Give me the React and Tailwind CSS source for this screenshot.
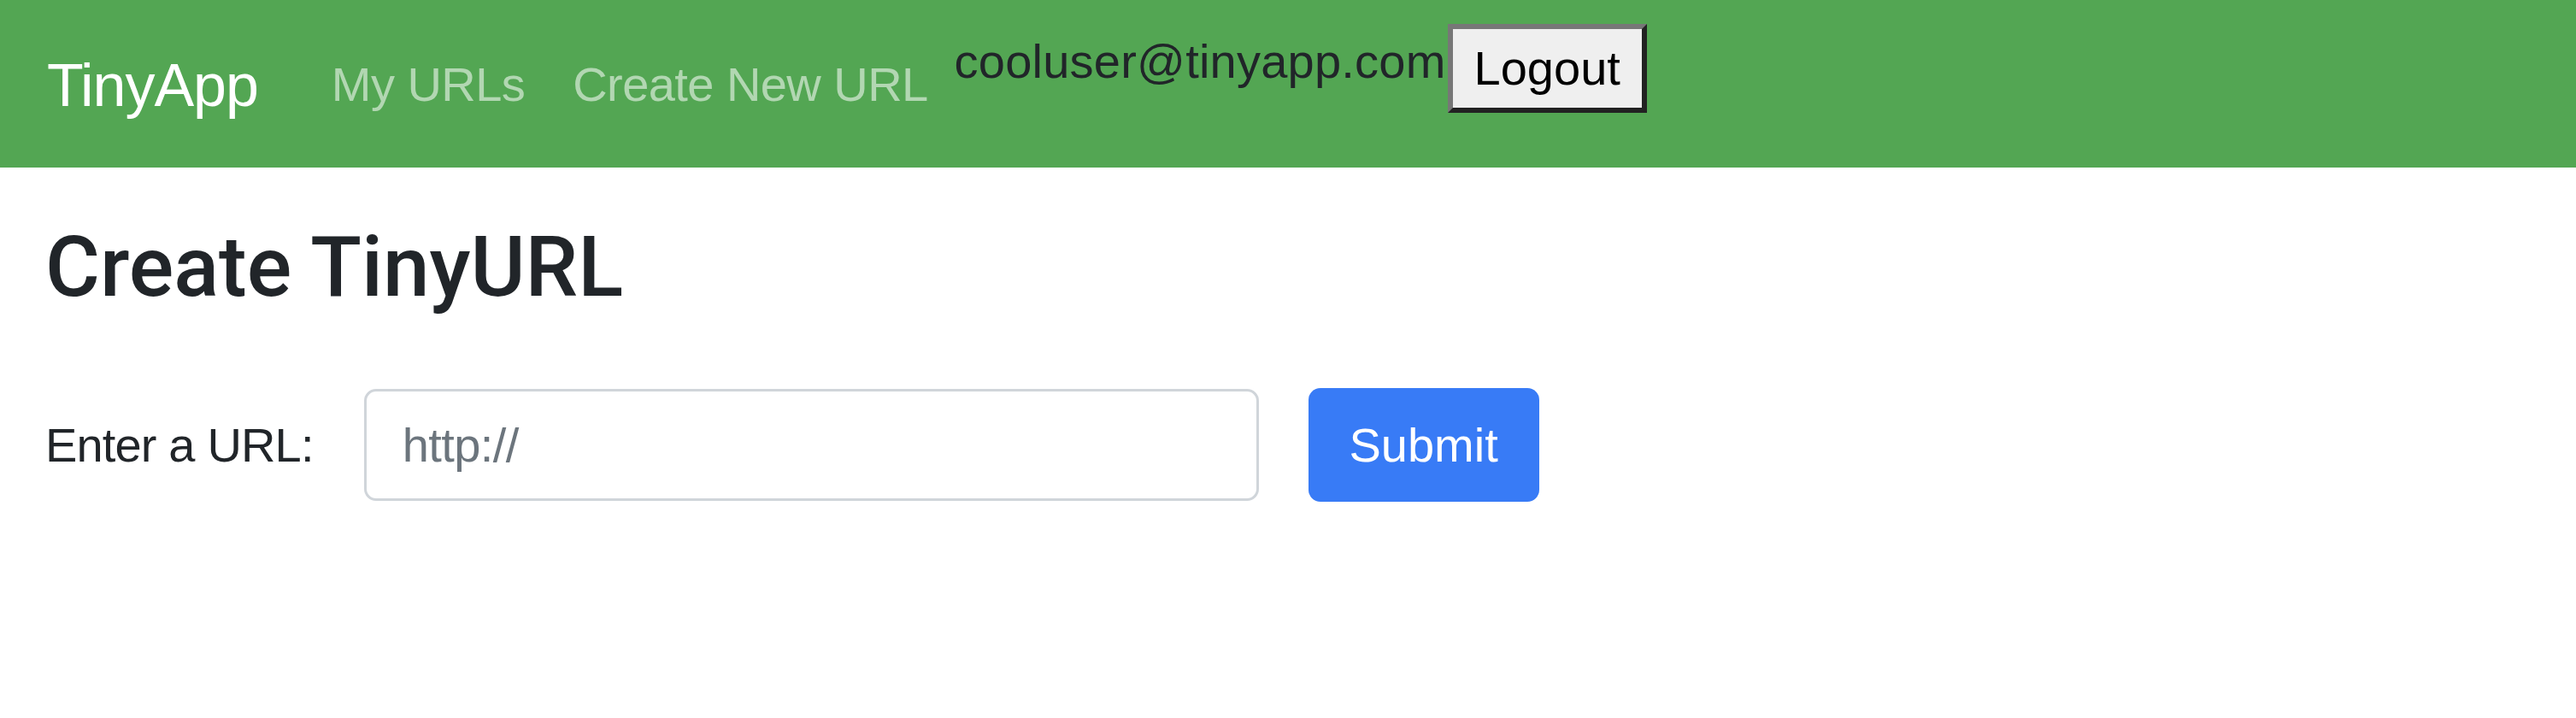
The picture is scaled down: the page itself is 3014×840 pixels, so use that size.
import React from "react";
import { useState } from "react";

const sys = { fontFamily: '"Liberation Sans", Arial, sans-serif' };

const App = () => {
    const [url, setUrl] = useState('');

    return (
        <div className="min-h-[840px] bg-white" style={sys}>
            {/* navbar */}
            <nav className="h-[196px] bg-[#53a653] flex items-start pt-[28px] pl-[55px]">
                <a className="mt-[20px] text-[70px] leading-[105px] text-white tracking-[-0.015em]">TinyApp</a>
                <div className="flex ml-[58px] mt-[29px]">
                    <a className="px-[28px] text-[56px] leading-[84px] text-white/55 tracking-[-0.01em]">My URLs</a>
                    <a className="px-[28px] text-[56px] leading-[84px] text-white/55 tracking-[-0.01em]">Create New URL</a>
                </div>
                <div className="flex items-start ml-[3px]">
                    <span className="mt-[2px] text-[56px] leading-[84px] text-[#212529] tracking-[0.004em]">cooluser@tinyapp.com</span>
                    <button className="ml-[2px] h-[104px] px-[25px] text-[56px] leading-[84px] text-black bg-[#efefef] border-[6px] border-t-[#777777] border-l-[#777777] border-b-[#222222] border-r-[#222222]">
                        Logout
                    </button>
                </div>
            </nav>

            {/* main */}
            <main className="pl-[53px]">
                <h3 className="mt-[58px] text-[98px] leading-[118px] text-[#212529] font-medium" style={{ fontFamily: 'Roboto, "Liberation Sans", sans-serif' }}>Create TinyURL</h3>
                <form
                    onSubmit={(e) => e.preventDefault()}
                    className="mt-[82px] flex items-center"
                >
                    <label className="text-[56px] leading-[84px] text-[#212529] tracking-[-0.015em]">Enter a URL:</label>
                    <input
                        placeholder="http://"
                        value={url}
                        onChange={(e) => setUrl(e.target.value)}
                        className="ml-[59px] w-[1047px] h-[131px] border-[3px] border-[#d0d5da] rounded-[14px] pl-[42px] text-[56px] text-[#212529] placeholder:text-[#6c757d] tracking-[-0.01em] outline-none"
                    />
                    <button type="submit" className="ml-[58px] w-[270px] h-[133px] rounded-[14px] bg-[#387bf6] text-white text-[56px]">
                        Submit
                    </button>
                </form>
            </main>
        </div>
    );
}

export default App;
